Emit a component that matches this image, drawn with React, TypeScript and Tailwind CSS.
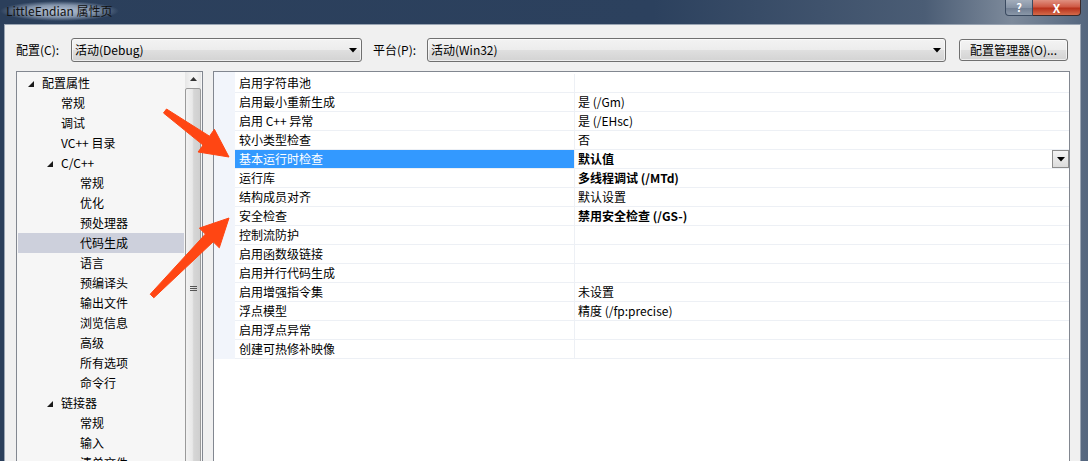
const FONT = "font-['Noto_Sans_CJK_SC','Noto_Sans',sans-serif]";

type TreeItem = { t: string; l: number; exp?: boolean; sel?: boolean };

const tree: TreeItem[] = [
  { t: '配置属性', l: 0, exp: true },
  { t: '常规', l: 1 },
  { t: '调试', l: 1 },
  { t: 'VC++ 目录', l: 1 },
  { t: 'C/C++', l: 1, exp: true },
  { t: '常规', l: 2 },
  { t: '优化', l: 2 },
  { t: '预处理器', l: 2 },
  { t: '代码生成', l: 2, sel: true },
  { t: '语言', l: 2 },
  { t: '预编译头', l: 2 },
  { t: '输出文件', l: 2 },
  { t: '浏览信息', l: 2 },
  { t: '高级', l: 2 },
  { t: '所有选项', l: 2 },
  { t: '命令行', l: 2 },
  { t: '链接器', l: 1, exp: true },
  { t: '常规', l: 2 },
  { t: '输入', l: 2 },
  { t: '清单文件', l: 2 },
];

const indent = ['pl-[10px]', 'pl-[29px]', 'pl-[48px]'];

type Prop = { name: string; value?: string; bold?: boolean; sel?: boolean };

const props: Prop[] = [
  { name: '启用字符串池' },
  { name: '启用最小重新生成', value: '是 (/Gm)' },
  { name: '启用 C++ 异常', value: '是 (/EHsc)' },
  { name: '较小类型检查', value: '否' },
  { name: '基本运行时检查', value: '默认值', bold: true, sel: true },
  { name: '运行库', value: '多线程调试 (/MTd)', bold: true },
  { name: '结构成员对齐', value: '默认设置' },
  { name: '安全检查', value: '禁用安全检查 (/GS-)', bold: true },
  { name: '控制流防护' },
  { name: '启用函数级链接' },
  { name: '启用并行代码生成' },
  { name: '启用增强指令集', value: '未设置' },
  { name: '浮点模型', value: '精度 (/fp:precise)' },
  { name: '启用浮点异常' },
  { name: '创建可热修补映像' },
];

function DownTri() {
  return (
    <svg width="8" height="5" viewBox="0 0 8 5">
      <polygon points="0,0 8,0 4,4.5" fill="#000" />
    </svg>
  );
}

function Combo({ text, w }: { text: string; w: string }) {
  return (
    <div
      className={`${w} h-[24px] flex items-center justify-between pl-[3px] pr-[4px] rounded-[3px] border border-[#707070] bg-[linear-gradient(#f3f3f3_0%,#ececec_50%,#dfdfdf_52%,#d3d3d3_100%)] shadow-[inset_0_0_0_1px_rgba(255,255,255,0.6)]`}
    >
      <span className="text-[12px] text-black">{text}</span>
      <DownTri />
    </div>
  );
}

// red callout arrow, tapered shaft + triangular head
function Arrow({ x1, y1, x2, y2 }: { x1: number; y1: number; x2: number; y2: number }) {
  const dx = x2 - x1;
  const dy = y2 - y1;
  const len = Math.hypot(dx, dy);
  const ux = dx / len;
  const uy = dy / len;
  const nx = -uy;
  const ny = ux;
  const headLen = 28;
  const headW = 14;
  const bx = x2 - ux * headLen;
  const by = y2 - uy * headLen;
  const pts = [
    [x1 + nx * 2.5, y1 + ny * 2.5],
    [bx + nx * 5.5, by + ny * 5.5],
    [bx + nx * headW, by + ny * headW],
    [x2, y2],
    [bx - nx * headW, by - ny * headW],
    [bx - nx * 5.5, by - ny * 5.5],
    [x1 - nx * 2.5, y1 - ny * 2.5],
  ]
    .map((p) => `${p[0].toFixed(1)},${p[1].toFixed(1)}`)
    .join(' ');
  return <polygon points={pts} fill="#ff4613" stroke="#ff4613" strokeWidth="1" strokeLinejoin="round" />;
}

export default function App() {
  return (
    <div className={`relative w-[1088px] h-[461px] overflow-hidden flex flex-col bg-[linear-gradient(to_right,#2b3f5b_0%,#2c415e_60%,#4b5d75_85%,#7d8a9b_93%,#54667e_100%)] ${FONT}`}>
      {/* title bar */}
      <div className="h-[24px] shrink-0 flex items-start justify-between pr-[7px]">
        <div className="mt-[1px] px-[6px] h-[20px] flex items-center bg-[radial-gradient(ellipse_closest-side_at_center,rgba(210,222,238,0.85)_0%,rgba(190,205,225,0.6)_60%,rgba(60,80,110,0)_100%)]">
          <span className="text-[12px] text-[#111] leading-none">LittleEndian 属性页</span>
        </div>
        <div className="flex">
          <div className="w-[28px] h-[16px] flex items-center justify-center rounded-bl-[4px] border border-t-0 border-[#3a4a60] bg-[linear-gradient(#a2adbb_0%,#8794a6_50%,#6f7d91_52%,#8a97a8_100%)]">
            <span className="text-[11px] font-bold text-white leading-none">?</span>
          </div>
          <div className="w-[48px] h-[16px] flex items-center justify-center rounded-br-[4px] border border-t-0 border-l-0 border-[#3a2a2a] bg-[linear-gradient(#e09080_0%,#cf5a45_45%,#b8321c_55%,#d46a4a_100%)]">
            <span className="text-[12px] font-bold text-white leading-none">X</span>
          </div>
        </div>
      </div>

      {/* dialog body */}
      <div className="ml-[4px] w-[1077px] flex-1 flex flex-col border-t border-l border-r border-[#9aa5b3] bg-[#f0f0f0] pt-[13px] pl-[11px] pr-[10px]">
        <div className="h-[24px] flex items-center text-[12px] text-black">
          <span className="w-[55px]">配置(C):</span>
          <Combo text="活动(Debug)" w="w-[291px]" />
          <span className="w-[54px] ml-[11px]">平台(P):</span>
          <Combo text="活动(Win32)" w="w-[519px]" />
          <div className="ml-[13px] w-[109px] h-[22px] flex items-center justify-center rounded-[3px] border border-[#707070] bg-[linear-gradient(#f3f3f3_0%,#ececec_50%,#dfdfdf_52%,#d3d3d3_100%)] shadow-[inset_0_0_0_1px_rgba(255,255,255,0.6)]">
            配置管理器(O)...
          </div>
        </div>

        <div className="mt-[9px] flex gap-[10px]">
          {/* tree */}
          <div className="w-[187px] h-[420px] shrink-0 border border-[#828790] bg-[#f6f6f6] flex">
            <div className="flex-1 pt-[1px] px-[1px]">
              {tree.map((it, i) => (
                <div
                  key={i}
                  className={`h-[20px] flex items-center text-[12px] text-black ${indent[it.l]} ${it.sel ? 'bg-[#cdd0dc]' : ''}`}
                >
                  <span className="w-[14px] flex items-center pt-[2px]">
                    {it.exp && (
                      <svg width="7" height="7" viewBox="0 0 7 7">
                        <polygon points="6,0 6,6 0,6" fill="#1a1a1a" />
                      </svg>
                    )}
                  </span>
                  <span>{it.t}</span>
                </div>
              ))}
            </div>
            {/* scrollbar */}
            <div className="w-[17px] shrink-0 flex flex-col bg-[linear-gradient(to_right,#e6e6e6,#f3f3f3_40%,#f3f3f3_70%,#e6e6e6)] border-r border-[#f6f6f6]">
              <div className="h-[18px] flex items-center justify-center">
                <svg width="7" height="4" viewBox="0 0 7 4">
                  <polygon points="0,4 7,4 3.5,0" fill="#333" />
                </svg>
              </div>
              <div className="mt-[1px] h-[496px] rounded-[2px] border border-[#9a9a9a] bg-[linear-gradient(to_right,#f2f2f2,#e8e8e8_45%,#d6d6d6_55%,#cfcfcf)] flex items-center justify-center">
                <div className="flex flex-col gap-[1px]">
                  <div className="w-[7px] h-[1px] bg-[#555]" />
                  <div className="w-[7px] h-[1px] bg-[#555]" />
                  <div className="w-[7px] h-[1px] bg-[#555]" />
                </div>
              </div>
            </div>
          </div>

          {/* property grid */}
          <div className="flex-1 h-[420px] border border-[#828790] bg-white flex items-start">
            <div className="w-[21px] h-[287px] shrink-0 bg-[#f2f5fb]" />
            <div className="flex-1 pt-[2px]">
              {props.map((p, i) => (
                <div key={i} className="h-[19px] flex border-b border-[#edf0f5] text-[12px] text-black">
                  <div
                    className={`w-[340px] shrink-0 border-r border-[#edf0f5] pl-[4px] leading-[18px] ${p.sel ? 'bg-[#3399ff] text-white' : ''}`}
                  >
                    {p.name}
                  </div>
                  <div className={`flex-1 flex justify-between pl-[3px] leading-[18px] ${p.bold ? 'font-bold' : ''}`}>
                    <span>{p.value ?? ''}</span>
                    {p.sel && (
                      <div className="w-[17px] h-[18px] flex items-center justify-center border border-[#8c8c8c] bg-[linear-gradient(#f4f4f4,#dcdcdc)]">
                        <DownTri />
                      </div>
                    )}
                  </div>
                </div>
              ))}
            </div>
          </div>
        </div>
      </div>

      {/* annotation arrows */}
      <svg className="absolute left-0 top-0 pointer-events-none" width="1088" height="461">
        <Arrow x1={165} y1={111} x2={229} y2={157} />
        <Arrow x1={152} y1={296} x2={229} y2={218} />
      </svg>
    </div>
  );
}
